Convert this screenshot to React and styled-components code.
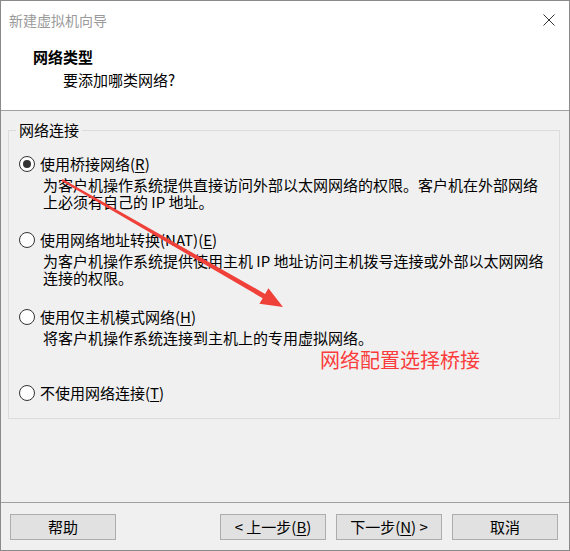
import React from "react";
import styled, { createGlobalStyle } from "styled-components";

const Global = createGlobalStyle`
  html, body { margin: 0; padding: 0; background: #fff; }
  body { font-family: "Noto Sans CJK SC", "Noto Sans", sans-serif; }
  * { box-sizing: border-box; }
`;

const Window = styled.div`
  position: relative;
  width: 570px;
  height: 551px;
  border: 1px solid #8a8a8a;
  display: flex;
  flex-direction: column;
  background: #f0f0f0;
  overflow: hidden;
  font-size: 15px;
  color: #000;
`;

const TitleBar = styled.div`
  flex: none;
  height: 38px;
  background: #fff;
  display: flex;
  align-items: center;
  justify-content: space-between;
  padding: 0 14px 0 8px;
`;

const Title = styled.span`
  font-size: 14px;
  line-height: 38px;
  color: #9a9a9a;
`;

const Header = styled.div`
  flex: none;
  background: #fff;
  border-bottom: 1px solid #a0a0a0;
  padding: 9px 0 21px 32px;
`;

const Heading = styled.div`
  font-weight: 700;
  line-height: 18px;
`;

const Subtitle = styled.div`
  margin: 5px 0 0 30px;
  line-height: 18px;
`;

const Body = styled.div`
  flex: 1;
  padding: 10px 9px 0 7px;
`;

const Group = styled.fieldset`
  margin: 0;
  min-width: 0;
  padding: 0 0 16px 7px;
  border: 1px solid #dcdcdc;
`;

const Legend = styled.legend`
  padding: 0 3px;
  line-height: 18px;
`;

const Options = styled.div`
  display: grid;
  grid-template-rows: 76px 77px 76px auto;
  padding-top: 16px;
  margin-left: 3px;
`;

const Option = styled.div`
  display: flex;
  flex-direction: column;
`;

const RadioLine = styled.div`
  display: flex;
  align-items: center;
  gap: 5px;
  height: 18px;
  line-height: 18px;
  white-space: nowrap;
`;

const Radio = styled.span`
  flex: none;
  width: 16px;
  height: 16px;
  border-radius: 50%;
  border: 1px solid #333;
  background: #fff;
  display: flex;
  align-items: center;
  justify-content: center;
  &::after {
    content: "";
    width: 8px;
    height: 8px;
    border-radius: 50%;
    background: #333;
    display: ${(p) => (p.$checked ? "block" : "none")};
  }
`;

const Desc = styled.div`
  margin: 3px 0 0 24px;
  line-height: 17px;
  white-space: nowrap;
`;

const Key = styled.u`
  text-decoration: underline;
  text-underline-offset: 2px;
`;

const Footer = styled.div`
  flex: none;
  border-top: 1px solid #a0a0a0;
  padding: 11px 11px 10px 9px;
  display: flex;
  gap: 10px;
`;

const Button = styled.button`
  width: 106px;
  height: 26px;
  padding: 0;
  background: #e1e1e1;
  border: 1px solid #adadad;
  font-family: inherit;
  font-size: 15px;
  line-height: 24px;
  color: #000;
  margin-right: ${(p) => (p.$push ? "auto" : "0")};
`;

const Arrow = styled.svg`
  position: absolute;
  left: -1px;
  top: -1px;
  pointer-events: none;
`;

const Note = styled.div`
  position: absolute;
  left: 319px;
  top: 347px;
  font-size: 20px;
  line-height: 24px;
  color: #fb3c3c;
  white-space: nowrap;
`;

function CloseIcon() {
  return (
    <svg width="12" height="12" viewBox="0 0 12 12">
      <path d="M0.5 0.5 L11.5 11.5 M11.5 0.5 L0.5 11.5" stroke="#333" strokeWidth="1" fill="none" />
    </svg>
  );
}

const options = [
  {
    label: "使用桥接网络",
    key: "R",
    checked: true,
    desc: ["为客户机操作系统提供直接访问外部以太网网络的权限。客户机在外部网络", "上必须有自己的 IP 地址。"],
  },
  {
    label: "使用网络地址转换(NAT)",
    key: "E",
    desc: ["为客户机操作系统提供使用主机 IP 地址访问主机拨号连接或外部以太网网络", "连接的权限。"],
  },
  {
    label: "使用仅主机模式网络",
    key: "H",
    desc: ["将客户机操作系统连接到主机上的专用虚拟网络。"],
  },
  { label: "不使用网络连接", key: "T", desc: [] },
];

export default function App() {
  return (
    <>
      <Global />
      <Window>
        <TitleBar>
          <Title>新建虚拟机向导</Title>
          <CloseIcon />
        </TitleBar>
        <Header>
          <Heading>网络类型</Heading>
          <Subtitle>要添加哪类网络?</Subtitle>
        </Header>
        <Body>
          <Group>
            <Legend>网络连接</Legend>
            <Options>
              {options.map((o) => (
                <Option key={o.key}>
                  <RadioLine>
                    <Radio $checked={o.checked} />
                    <span>
                      {o.label}(<Key>{o.key}</Key>)
                    </span>
                  </RadioLine>
                  {o.desc.length > 0 && (
                    <Desc>
                      {o.desc.map((line, i) => (
                        <div key={i}>{line}</div>
                      ))}
                    </Desc>
                  )}
                </Option>
              ))}
            </Options>
          </Group>
        </Body>
        <Footer>
          <Button $push>帮助</Button>
          <Button>
            &lt; 上一步(<Key>B</Key>)
          </Button>
          <Button>
            下一步(<Key>N</Key>) &gt;
          </Button>
          <Button>取消</Button>
        </Footer>
        <Arrow width="570" height="551" viewBox="0 0 570 551">
          <polygon
            points="62.5,179.1 265.1,293.9 268.4,288.2 283,307 259.4,303.8 262.7,298.2 61.5,180.9"
            fill="#f0403a"
          />
        </Arrow>
        <Note>网络配置选择桥接</Note>
      </Window>
    </>
  );
}
